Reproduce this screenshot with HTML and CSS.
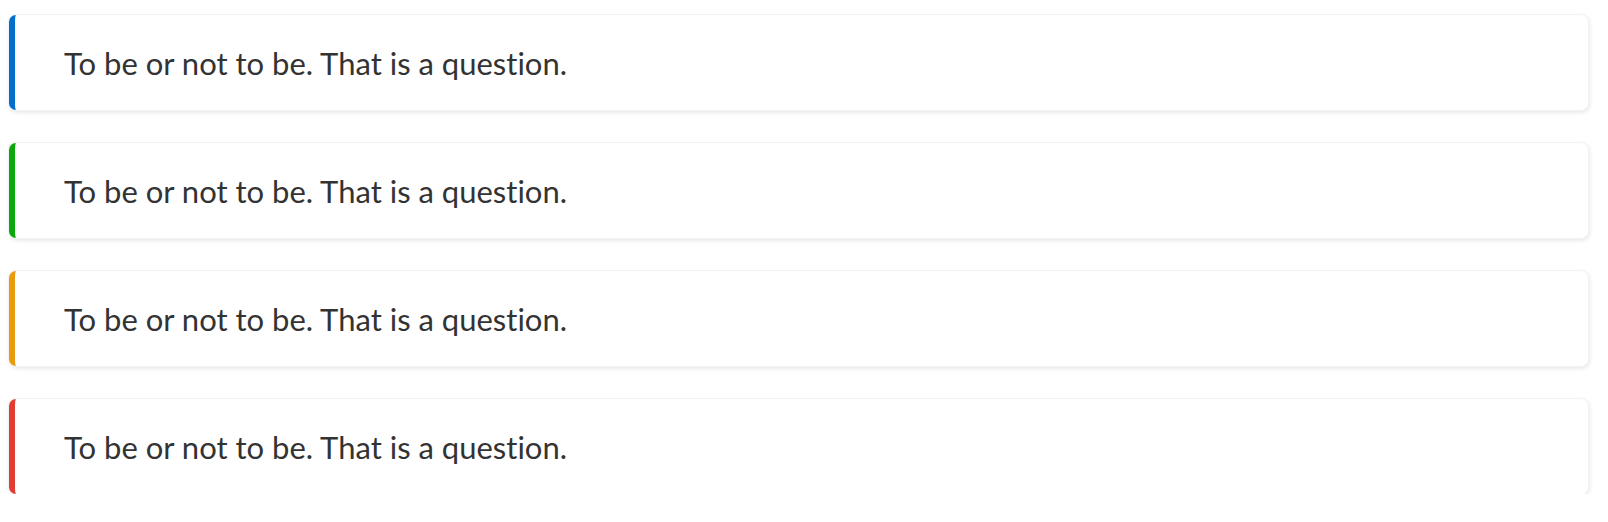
FILE: index.html
```html
<!DOCTYPE html>
<html>
<head>
<meta charset="utf-8">
<link rel="stylesheet" href="styles.css">
</head>
<body>
<div class="list">
  <div class="note note-info">To be or not to be. That is a question.</div>
  <div class="note note-success">To be or not to be. That is a question.</div>
  <div class="note note-warning">To be or not to be. That is a question.</div>
  <div class="note note-danger">To be or not to be. That is a question.</div>
</div>
</body>
</html>
```

FILE: styles.css
```css
html, body {
  margin: 0;
  padding: 0;
  background: #ffffff;
}
.list {
  display: flex;
  flex-direction: column;
  gap: 33px;
  padding: 15px 20px 0 9px;
}
.note {
  height: 95px;
  box-sizing: border-box;
  display: flex;
  align-items: center;
  padding-left: 49px;
  border-left: 6px solid #0070cc;
  border-radius: 7px;
  background: #fff;
  box-shadow: 0 0 0 1px #f3f3f3, 1px 2px 5px rgba(0,0,0,0.12);
  font-family: Lato, "Source Sans Pro", sans-serif;
  font-variant-ligatures: none;
  font-size: 31px;
  color: #333333;
}
.note-info { border-left-color: #0070cc; }
.note-success { border-left-color: #0aa80a; }
.note-warning { border-left-color: #e99b10; }
.note-danger { border-left-color: #e03e33; }
```
